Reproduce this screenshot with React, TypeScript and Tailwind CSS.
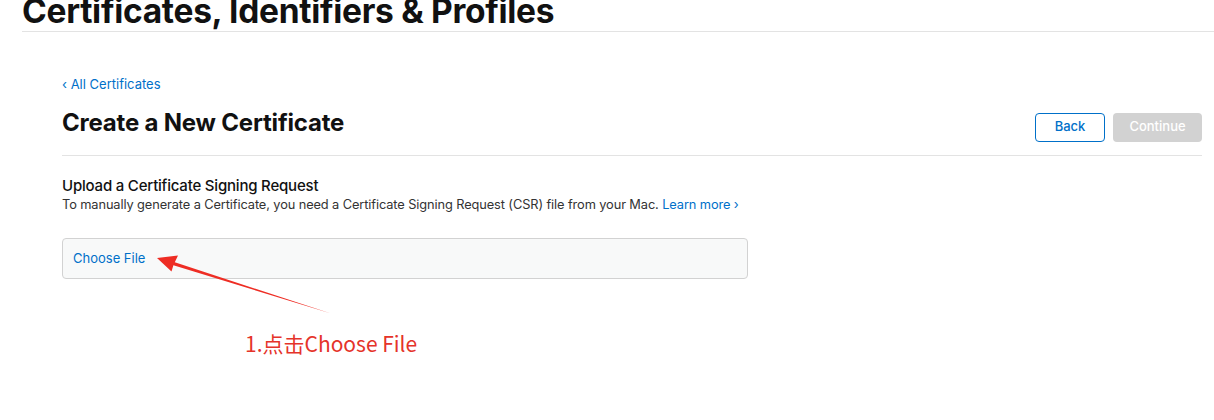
export default function App() {
  const font = { fontFamily: 'Inter, "Noto Sans", "Liberation Sans", sans-serif' };
  return (
    <div className="relative w-[1214px] h-[420px] overflow-hidden bg-white text-[#111]" style={font}>
      <div className="ml-[22px] h-[32px] border-b border-[#e3e3e3] flex flex-col">
        <h1 className="mt-[-5px] text-[33.5px] leading-[32px] font-bold tracking-[-0.3px] text-[#111] whitespace-nowrap">
          Certificates, Identifiers &amp; Profiles
        </h1>
      </div>
      <div className="ml-[62px] mr-[12px] flex flex-col">
        <div className="mt-[44px] h-[16px] text-[13px] leading-[16px] text-[#0070c9]">
          ‹ All Certificates
        </div>
        <div className="mt-[16px] flex items-center justify-between h-[30px]">
          <h2 className="text-[24px] leading-[30px] font-bold tracking-[-0.2px] text-[#111]">
            Create a New Certificate
          </h2>
          <div className="flex gap-[8px] mt-[8px]">
            <button className="w-[70px] h-[29px] rounded-[4px] border border-[#0070c9] text-[13px] font-medium text-[#0070c9] bg-white">
              Back
            </button>
            <button className="w-[89px] h-[29px] rounded-[4px] bg-[#d2d2d2] text-[13px] font-medium text-white">
              Continue
            </button>
          </div>
        </div>
        <div className="mt-[17px] border-b border-[#e3e3e3]"></div>
        <div className="mt-[20px] text-[15px] leading-[20px] font-medium tracking-[-0.2px] text-[#111]">
          Upload a Certificate Signing Request
        </div>
        <div className="text-[12.8px] leading-[18px] text-[#333] tracking-[-0.1px]">
          To manually generate a Certificate, you need a Certificate Signing Request (CSR) file from your Mac.{' '}
          <span className="text-[#0070c9]">Learn more ›</span>
        </div>
        <div className="mt-[24px] w-[686px] h-[41px] rounded-[4px] border border-[#d2d2d2] bg-[#f8f9f9] flex items-center px-[10px]">
          <span className="text-[13px] text-[#0070c9]">Choose File</span>
        </div>
      </div>
      <svg className="absolute left-0 top-0" width="1214" height="420" viewBox="0 0 1214 420">
        <polygon
          points="157,258 178,255.5 174.8,262.3 331,313.5 173.4,265.3 171.5,271.5"
          fill="#ee2d24"
        />
      </svg>
      <div
        className="absolute left-[245px] top-[329px] text-[21px] leading-[28px] text-[#e5332a]"
        style={{ fontFamily: '"Noto Sans CJK SC", "Noto Sans", sans-serif' }}
      >
        1.点击Choose File
      </div>
    </div>
  );
}
